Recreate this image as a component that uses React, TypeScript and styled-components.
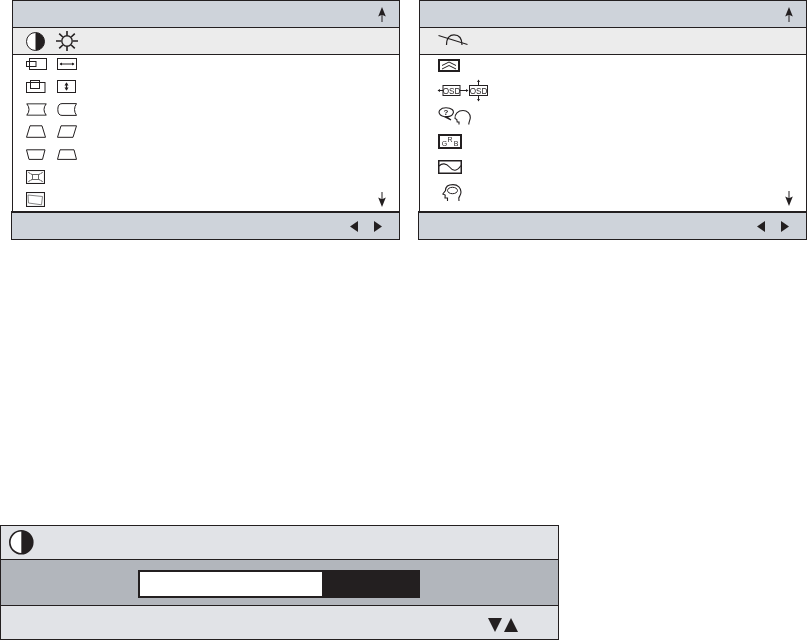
import React from "react";
import styled, { createGlobalStyle } from "styled-components";

const COLORS = {
  ink: "#231f20",
  header: "#ced3da",
  selected: "#ececec",
  titleBg: "#e1e3e7",
  midBg: "#b2b6bc"
};

const GlobalStyle = createGlobalStyle`
  html, body {
    margin: 0;
    padding: 0;
    background: #fff;
    font-family: "Liberation Sans", Arial, sans-serif;
  }
`;

const Page = styled.div`
  width: 807px;
  height: 640px;
  display: flex;
  flex-direction: column;
  justify-content: space-between;
`;

const Menus = styled.div`
  display: flex;
  gap: 18px;
  padding-left: 11px;
`;

const Menu = styled.section`
  width: 389px;
  display: flex;
  flex-direction: column;
`;

const MenuHeader = styled.div`
  height: 27px;
  margin-left: 1px;
  box-sizing: border-box;
  background: ${COLORS.header};
  border: solid ${COLORS.ink};
  border-width: 1px 1px 0;
  display: flex;
  align-items: center;
  justify-content: flex-end;
  padding-right: 13px;
`;

const MenuBody = styled.div`
  margin-left: 1px;
  height: 184px;
  display: flex;
  flex-direction: column;
  box-sizing: border-box;
  border: solid ${COLORS.ink};
  border-width: 1px 1px 0;
`;

const SelectedRow = styled.div<{ $indent: number }>`
  height: 27px;
  flex: none;
  box-sizing: border-box;
  display: flex;
  align-items: center;
  padding-left: ${(p) => p.$indent}px;
  background: ${COLORS.selected};
  border-bottom: 1.5px solid ${COLORS.ink};
`;

const RowList = styled.div<{ $top: number; $rowHeight: number; $gap: number }>`
  display: flex;
  flex-direction: column;
  padding: ${(p) => p.$top}px 13px 0 0;
  row-gap: ${(p) => p.$gap}px;
  & > * {
    height: ${(p) => p.$rowHeight}px;
  }
`;

const Row = styled.div<{ $indent: number }>`
  display: flex;
  align-items: center;
  padding-left: ${(p) => p.$indent}px;
`;

const IconPair = styled.span<{ $w?: number }>`
  display: flex;
  width: ${(p) => p.$w ?? 31}px;
`;

const ScrollEnd = styled.span<{ $drop?: number }>`
  margin-left: auto;
  margin-top: ${(p) => p.$drop ?? 0}px;
  display: flex;
`;

const MenuFooter = styled.div`
  height: 29px;
  box-sizing: border-box;
  background: ${COLORS.header};
  border: 1px solid ${COLORS.ink};
  border-top: 2px solid ${COLORS.ink};
  display: flex;
  align-items: center;
  justify-content: flex-end;
  gap: 16px;
  padding-right: 17px;
`;

const Adjust = styled.section`
  width: 559px;
  height: 115px;
  box-sizing: border-box;
  border: 1px solid ${COLORS.ink};
  display: grid;
  grid-template-rows: 33px 47px 1fr;
`;

const AdjustTitle = styled.div`
  background: ${COLORS.titleBg};
  display: flex;
  align-items: center;
  padding-left: 8px;
`;

const AdjustMiddle = styled.div`
  background: ${COLORS.midBg};
  border: solid ${COLORS.ink};
  border-width: 1px 0;
  display: flex;
  align-items: center;
  padding: 3px 0 0 137px;
`;

const Track = styled.div`
  width: 282px;
  height: 28px;
  box-sizing: border-box;
  background: ${COLORS.ink};
  border: 2px solid ${COLORS.ink};
`;

const Fill = styled.div`
  height: 100%;
  background: #fff;
`;

const AdjustFooter = styled.div`
  background: ${COLORS.titleBg};
  display: flex;
  align-items: center;
  justify-content: flex-end;
  gap: 2px;
  padding: 5px 40px 0 0;
`;

// will-change keeps the small icon labels grey instead of LCD-fringed
const Glyph = styled.svg`
  display: block;
  flex: none;
  fill: none;
  stroke: ${COLORS.ink};
  stroke-width: 1;
  will-change: transform;
`;

const IconText = styled.text<{ $size: number; $bold?: boolean }>`
  font-family: "Liberation Sans", Arial, sans-serif;
  font-size: ${(p) => p.$size}px;
  font-weight: ${(p) => (p.$bold ? 700 : 400)};
  fill: ${COLORS.ink};
  stroke: none;
  text-anchor: middle;
`;

const Svg: React.FC<{ w: number; h: number; children: React.ReactNode }> = ({
  w,
  h,
  children
}) => (
  <Glyph width={w} height={h} viewBox={`0 0 ${w} ${h}`}>
    {children}
  </Glyph>
);

const solid = { fill: COLORS.ink, stroke: "none" };

const ArrowUp = () => (
  <Svg w={8} h={15}>
    <path d="M4 0 L7.8 9.5 L4.6 8 L3.4 8 L0.2 9.5 Z" style={solid} />
    <path d="M4 7 V15" />
  </Svg>
);

const ArrowDown = () => (
  <Svg w={8} h={15}>
    <path d="M4 15 L7.8 5.5 L4.6 7 L3.4 7 L0.2 5.5 Z" style={solid} />
    <path d="M4 0 V8" />
  </Svg>
);

const Tri: React.FC<{ dir: "left" | "right" | "up" | "down"; w: number; h: number }> = ({
  dir,
  w,
  h
}) => {
  const points = {
    left: `${w},0 ${w},${h} 0,${h / 2}`,
    right: `0,0 0,${h} ${w},${h / 2}`,
    up: `0,${h} ${w},${h} ${w / 2},0`,
    down: `0,0 ${w},0 ${w / 2},${h}`
  }[dir];
  return (
    <Svg w={w} h={h}>
      <polygon points={points} style={solid} />
    </Svg>
  );
};

const Contrast: React.FC<{ r: number; sw: number }> = ({ r, sw }) => {
  const c = r + sw / 2;
  return (
    <Svg w={c * 2} h={c * 2}>
      <circle cx={c} cy={c} r={r} strokeWidth={sw} fill="#fff" />
      <path d={`M${c} ${c - r} A${r} ${r} 0 0 1 ${c} ${c + r} Z`} style={solid} />
    </Svg>
  );
};

const Sun = () => (
  <Svg w={22} h={20}>
    <circle cx="11" cy="10" r="5.2" strokeWidth="1.4" />
    <path
      d="M11 0 V4.5 M11 15.5 V20 M0 10 H5 M17 10 H22 M3.2 2.7 L6.8 6 M18.8 2.7 L15.2 6 M3.2 17.3 L6.8 14 M18.8 17.3 L15.2 14"
      strokeWidth="1.6"
    />
  </Svg>
);

const HSizeA = () => (
  <Svg w={21} h={12}>
    <rect x="3.5" y="0.5" width="17" height="11" />
    <rect x="0.5" y="3.5" width="9.5" height="5" />
  </Svg>
);

const HSizeB = () => (
  <Svg w={20} h={12}>
    <rect x="0.5" y="0.5" width="19" height="11" />
    <path d="M3 6 H17" />
    <path d="M2.5 6 L5 4.6 V7.4 Z M17.5 6 L15 4.6 V7.4 Z" style={solid} />
  </Svg>
);

const VSizeA = () => (
  <Svg w={20} h={13}>
    <rect x="0.5" y="2.5" width="18.5" height="10" />
    <rect x="4.5" y="0.5" width="9" height="8" />
  </Svg>
);

const VSizeB = () => (
  <Svg w={19} h={13}>
    <rect x="0.5" y="0.5" width="18" height="12" />
    <path d="M9.5 3 V10" strokeWidth="1.2" />
    <path d="M9.5 2.2 L7.5 5.4 H11.5 Z M9.5 10.8 L7.5 7.6 H11.5 Z" style={solid} />
  </Svg>
);

const Pincushion = () => (
  <Svg w={21} h={13}>
    <path d="M0.5 0.8 H20.5 M0.5 12.2 H20.5" stroke="#777" strokeWidth="1.4" />
    <path d="M1 1 Q5 6.5 1 12 M20 1 Q16 6.5 20 12" />
  </Svg>
);

const SideCurve = () => (
  <Svg w={20} h={13}>
    <path d="M19.5 0.6 H5 Q0.8 0.6 0.8 6.5 Q0.8 12.4 5 12.4 H19.5" />
    <path d="M19.5 0.6 Q15.5 6.5 19.5 12.4" />
  </Svg>
);

const Trapezoid = () => (
  <Svg w={20} h={13}>
    <path d="M4 0.8 H16 L19.5 12.3 H0.5 Z" />
  </Svg>
);

const Parallelogram = () => (
  <Svg w={20} h={13}>
    <path d="M4 0.8 H19.5 L16 12.3 H0.5 Z" />
  </Svg>
);

const TrapezoidDown = () => (
  <Svg w={20} h={11}>
    <path d="M0.5 0.8 H19 L16.5 10.4 H3 Z" />
  </Svg>
);

const TrapezoidFlare = () => (
  <Svg w={20} h={11}>
    <path d="M3 0.8 H17 L19.5 10.4 H0.5 Z" />
  </Svg>
);

const Corners = () => (
  <Svg w={19} h={14}>
    <rect x="0.5" y="0.5" width="18" height="13" strokeWidth="1.1" />
    <rect x="6.5" y="4.5" width="6" height="5" stroke="#666" />
    <path
      d="M2.5 2.5 L6 4.5 M16.5 2.5 L13 4.5 M2.5 11.5 L6 9.5 M16.5 11.5 L13 9.5"
      strokeDasharray="1.5 0.8"
    />
  </Svg>
);

const Tilted = () => (
  <Svg w={19} h={15}>
    <rect x="0.5" y="0.5" width="18" height="14" strokeWidth="1.1" />
    <path d="M2 3 L16.5 4.5 L15.5 12.8 L2.5 11 Z" stroke="#666" strokeWidth="0.8" />
  </Svg>
);

const Cut = () => (
  <Svg w={30} h={15}>
    <path d="M0.5 1.5 L29.5 10.5" strokeWidth="1.1" />
    <path d="M8.5 11 C8.5 3.5 12 0.8 16 0.8 C21 0.8 24 4 24 11" strokeWidth="1.2" />
  </Svg>
);

const Chevrons = () => (
  <Svg w={22} h={13}>
    <rect x="1" y="1" width="20" height="11" strokeWidth="2" />
    <path d="M4 6.5 L11 3 L18 6.5 M4 10 L11 6.5 L18 10" />
  </Svg>
);

const OsdPosition = () => (
  <Svg w={52} h={23}>
    <rect x="6" y="6.5" width="17" height="10" />
    <rect x="32.5" y="6.5" width="18" height="10" />
    <IconText $size={8.2} x="14.5" y="14.5">OSD</IconText>
    <IconText $size={8.2} x="41.5" y="14.5">OSD</IconText>
    <path d="M1 11.5 H6 M23 11.5 H31 M41.5 1 V6.5 M41.5 16.5 V22" />
    <path
      d="M0.5 11.5 L3 10 V13 Z M31.5 11.5 L29 10 V13 Z M41.5 0.5 L40 3 H43 Z M41.5 22.5 L40 20 H43 Z"
      style={solid}
    />
  </Svg>
);

const Help = () => (
  <Svg w={33} h={18}>
    <path d="M2.5 8 C-1 4.5 2.5 0.8 8 0.8 C13.5 0.8 16.5 3.5 15 6.5 C14 9 11 9.8 8.5 9.6 L13 13 L6 9.5 Q4 9.3 2.5 8 Z" strokeWidth="1.1" />
    <IconText $size={8} $bold x="8" y="8">?</IconText>
    <path
      d="M21 17.5 V15 H19.2 L18.8 12.5 L17 11.5 C16.5 7 20 3.5 25 3.5 C29.5 3.5 32.3 6.8 32.3 10.5 C32.3 13 30.8 14.5 30.8 17.5"
      strokeWidth="1.1"
    />
  </Svg>
);

const Rgb = () => (
  <Svg w={24} h={15}>
    <rect x="1" y="1" width="22" height="13" strokeWidth="2" />
    <IconText $size={7} x="12" y="8">R</IconText>
    <IconText $size={7} x="6.5" y="12.3">G</IconText>
    <IconText $size={7} x="18" y="12.3">B</IconText>
  </Svg>
);

const Wave = () => (
  <Svg w={24} h={14}>
    <rect x="0.75" y="0.75" width="22.5" height="12.5" strokeWidth="1.5" />
    <path d="M1 6 C4 3 8 3 11.5 7 C15 11.5 19 11.5 23 5.5" strokeWidth="1.1" />
  </Svg>
);

const Head = () => (
  <Svg w={20} h={18}>
    <path
      d="M5.5 17 V14 H3 L3.2 11 L0.8 10 L3.5 6.5 C3.5 2.5 7 0.6 11 0.6 C16 0.6 19 4 19 8 C19 11 17.2 12.5 16.8 14 L17 17"
      strokeWidth="1.1"
    />
    <ellipse cx="10.5" cy="6.5" rx="5" ry="3.2" />
  </Svg>
);

const leftRows: React.ReactNode[][] = [
  [<HSizeA />, <HSizeB />],
  [<VSizeA />, <VSizeB />],
  [<Pincushion />, <SideCurve />],
  [<Trapezoid />, <Parallelogram />],
  [<TrapezoidDown />, <TrapezoidFlare />],
  [<Corners />],
  [<Tilted />]
];

const rightRows: { icon: React.ReactNode; indent: number }[] = [
  { icon: <Chevrons />, indent: 18 },
  { icon: <OsdPosition />, indent: 17 },
  { icon: <Help />, indent: 18 },
  { icon: <Rgb />, indent: 18 },
  { icon: <Wave />, indent: 18 },
  { icon: <Head />, indent: 22 }
];

export default function App() {
  return (
    <Page>
      <GlobalStyle />
      <Menus>
        <Menu>
          <MenuHeader>
            <ArrowUp />
          </MenuHeader>
          <MenuBody>
            <SelectedRow $indent={13}>
              <IconPair $w={30}>
                <Contrast r={9} sw={1} />
              </IconPair>
              <Sun />
            </SelectedRow>
            <RowList $top={2} $rowHeight={14} $gap={8.67}>
              {leftRows.map((icons, i) => (
                <Row key={i} $indent={13}>
                  <IconPair>{icons[0]}</IconPair>
                  {icons[1]}
                  {i === leftRows.length - 1 && (
                    <ScrollEnd>
                      <ArrowDown />
                    </ScrollEnd>
                  )}
                </Row>
              ))}
            </RowList>
          </MenuBody>
          <MenuFooter>
            <Tri dir="left" w={8} h={11} />
            <Tri dir="right" w={8} h={11} />
          </MenuFooter>
        </Menu>
        <Menu>
          <MenuHeader>
            <ArrowUp />
          </MenuHeader>
          <MenuBody>
            <SelectedRow $indent={18}>
              <Cut />
            </SelectedRow>
            <RowList $top={2} $rowHeight={16} $gap={9.6}>
              {rightRows.map((row, i) => (
                <Row key={i} $indent={row.indent}>
                  {row.icon}
                  {i === rightRows.length - 1 && (
                    <ScrollEnd $drop={12}>
                      <ArrowDown />
                    </ScrollEnd>
                  )}
                </Row>
              ))}
            </RowList>
          </MenuBody>
          <MenuFooter>
            <Tri dir="left" w={8} h={11} />
            <Tri dir="right" w={8} h={11} />
          </MenuFooter>
        </Menu>
      </Menus>
      <Adjust>
        <AdjustTitle>
          <Contrast r={11.5} sw={1.6} />
        </AdjustTitle>
        <AdjustMiddle>
          <Track>
            <Fill style={{ width: `${(182 / 278) * 100}%` }} />
          </Track>
        </AdjustMiddle>
        <AdjustFooter>
          <Tri dir="down" w={14} h={14} />
          <Tri dir="up" w={14} h={14} />
        </AdjustFooter>
      </Adjust>
    </Page>
  );
}
